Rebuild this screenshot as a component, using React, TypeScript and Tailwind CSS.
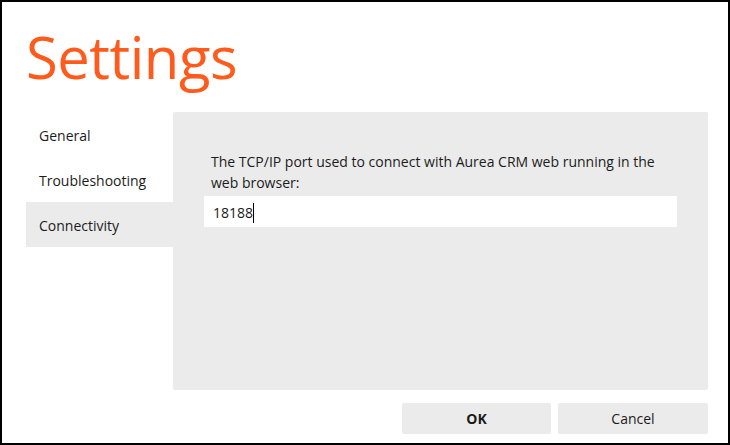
import React from 'react';

const navItems = ['General', 'Troubleshooting', 'Connectivity'];

const App = () => {
  const active = 'Connectivity';

  return (
    <div
      className="w-[730px] h-[445px] border-2 border-black bg-white flex flex-col text-[#1b1b1b]"
      style={{ fontFamily: '"Open Sans", "Noto Sans", Arial, sans-serif' }}
    >
      {/* Title */}
      <div className="h-[110px] shrink-0 pl-[24px] pt-[26px]">
        <h1 className="text-[58px] leading-none font-normal text-[#ff5b1c] tracking-[-0.5px]">
          Settings
        </h1>
      </div>

      {/* Body */}
      <div className="flex h-[278px] shrink-0 pl-[24px] pr-[20px]">
        <nav className="w-[147px] shrink-0 flex flex-col">
          {navItems.map((item) => (
            <div
              key={item}
              className={
                item === active
                  ? 'h-[45px] flex items-center pl-[13px] pt-[2px] text-[14px] bg-[#ebebeb]'
                  : 'h-[45px] flex items-center pl-[13px] pt-[2px] text-[14px]'
              }
            >
              {item}
            </div>
          ))}
        </nav>

        <section className="flex-1 bg-[#ebebeb] rounded-[2px] pl-[31px] pt-[39px]">
          <p className="w-[466px] pl-[7px] text-[14px] leading-[21px]">
            The TCP/IP port used to connect with Aurea CRM web running in the web browser:
          </p>
          <div className="mt-[3px] w-[473px] h-[31px] bg-white flex items-center pl-[9px] pt-[2px] text-[14px]">
            <span>18188</span>
            <span className="inline-block w-px h-[20px] bg-black"></span>
          </div>
        </section>
      </div>

      {/* Footer buttons */}
      <div className="flex justify-end gap-[7px] pr-[20px] mt-[13px]">
        <button className="w-[149px] h-[31px] bg-[#ebebeb] rounded-[2px] text-[14px] font-bold">
          OK
        </button>
        <button className="w-[150px] h-[31px] bg-[#ebebeb] rounded-[2px] text-[14px]">
          Cancel
        </button>
      </div>
    </div>
  );
};

export default App;
